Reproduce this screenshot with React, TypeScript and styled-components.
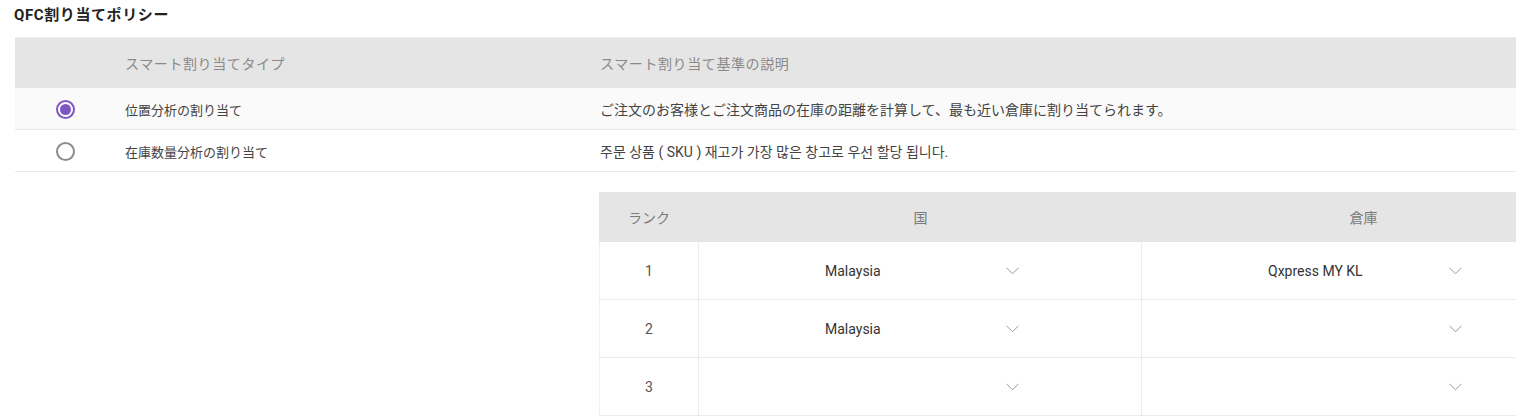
import styled, { createGlobalStyle } from 'styled-components'

const GlobalStyle = createGlobalStyle`
  html, body {
    margin: 0;
    padding: 0;
    background: #fff;
    overflow: hidden;
  }
  body {
    font-family: Roboto, "Noto Sans CJK JP", "Noto Sans CJK KR", sans-serif;
    color: #333;
  }
`

const policies = [
  {
    name: '位置分析の割り当て',
    desc: 'ご注文のお客様とご注文商品の在庫の距離を計算して、最も近い倉庫に割り当てられます。',
    checked: true
  },
  {
    name: '在庫数量分析の割り当て',
    desc: '주문 상품 ( SKU ) 재고가 가장 많은 창고로 우선 할당 됩니다.',
    checked: false
  }
]

const ranks = [
  { rank: 1, country: 'Malaysia', warehouse: 'Qxpress MY KL' },
  { rank: 2, country: 'Malaysia', warehouse: '' },
  { rank: 3, country: '', warehouse: '' }
]

const Chevron = () => (
  <svg width="13" height="8" viewBox="0 0 13 8" fill="none">
    <polyline points="0.5,0.8 6.5,6.8 12.5,0.8" stroke="#9a9a9a" strokeWidth="1" />
  </svg>
)

const Radio = (props: { checked: boolean }) => (
  <RadioRing checked={props.checked}>{props.checked && <RadioDot />}</RadioRing>
)

export default function App() {
  return (
    <Page>
      <GlobalStyle />
      <Title>QFC割り当てポリシー</Title>
      <PolicyTable>
        <HeadRow>
          <HeadCell />
          <HeadCell>スマート割り当てタイプ</HeadCell>
          <HeadCell>スマート割り当て基準の説明</HeadCell>
        </HeadRow>
        {policies.map((p, i) => (
          <PolicyRow key={p.name} shaded={i === 0}>
            <RadioCell>
              <Radio checked={p.checked} />
            </RadioCell>
            <NameCell>{p.name}</NameCell>
            <DescCell>{p.desc}</DescCell>
          </PolicyRow>
        ))}
        <DetailRow>
          <div />
          <div />
          <RankTable>
            <RankHead>
              <RankHeadCell>ランク</RankHeadCell>
              <RankHeadCell>国</RankHeadCell>
              <RankHeadCell>倉庫</RankHeadCell>
            </RankHead>
            {ranks.map((r) => (
              <RankRow key={r.rank}>
                <RankNo>{r.rank}</RankNo>
                <SelectCell>
                  <Select>
                    <SelectValue>{r.country}</SelectValue>
                    <Chevron />
                  </Select>
                </SelectCell>
                <SelectCell>
                  <Select>
                    <SelectValue>{r.warehouse}</SelectValue>
                    <Chevron />
                  </Select>
                </SelectCell>
              </RankRow>
            ))}
          </RankTable>
        </DetailRow>
      </PolicyTable>
    </Page>
  )
}

const Page = styled.div`
  width: 1700px;
  height: 417px;
  overflow: hidden;
`
const Title = styled.div`
  height: 37px;
  padding: 5px 0 0 14px;
  box-sizing: border-box;
  font-size: 15px;
  font-weight: 700;
  line-height: 20px;
  letter-spacing: 0.6px;
  color: #222;
`
const PolicyTable = styled.div`
  margin-left: 15px;
  width: 1620px;
  border-top: 1px solid #ececec;
`
const Columns = styled.div`
  display: grid;
  grid-template-columns: 100px 475px 1fr;
`
const HeadRow = styled(Columns)`
  height: 50px;
  background: #e5e5e5;
  align-items: center;
`
const HeadCell = styled.div`
  padding-left: 10px;
  font-size: 14px;
  letter-spacing: 0.6px;
  color: #8a8a8a;
`
const PolicyRow = styled(Columns)<{ shaded: boolean }>`
  height: 42px;
  box-sizing: border-box;
  align-items: center;
  background: ${(p) => (p.shaded ? '#fafafa' : '#fff')};
  border-bottom: 1px solid #e9e9e9;
  font-size: 13px;
  color: #444;
`
const RadioCell = styled.div`
  display: flex;
  justify-content: center;
  padding-top: 1px;
`
const RadioRing = styled.div<{ checked: boolean }>`
  width: 19px;
  height: 19px;
  box-sizing: border-box;
  border-radius: 50%;
  border: 2px solid ${(p) => (p.checked ? '#7e57c2' : '#8c8c8c')};
  display: flex;
  align-items: center;
  justify-content: center;
`
const RadioDot = styled.div`
  width: 11px;
  height: 11px;
  border-radius: 50%;
  background: #7e57c2;
`
const NameCell = styled.div`
  padding: 1px 0 0 10px;
`
const DescCell = styled.div`
  padding: 1px 0 0 10px;
  font-size: 14px;
  color: #444;
`
const DetailRow = styled(Columns)`
  padding-top: 20px;
`
const RankTable = styled.div`
  margin-left: 9px;
  width: 986px;
`
const RankGrid = styled.div`
  display: grid;
  grid-template-columns: 100px 443px 443px;
`
const RankHead = styled(RankGrid)`
  height: 50px;
  background: #e5e5e5;
  align-items: center;
`
const RankHeadCell = styled.div`
  text-align: center;
  font-size: 14px;
  color: #7a7a7a;
`
const RankRow = styled(RankGrid)`
  height: 58px;
  box-sizing: border-box;
  border-bottom: 1px solid #ebebeb;
`
const RankNo = styled.div`
  display: flex;
  align-items: center;
  justify-content: center;
  border-left: 1px solid #f0f0f0;
  border-right: 1px solid #ebebeb;
  font-size: 14px;
  color: #555;
`
const SelectCell = styled.div`
  display: flex;
  align-items: center;
  justify-content: center;
  border-right: 1px solid #ebebeb;
`
const Select = styled.div`
  width: 218px;
  box-sizing: border-box;
  padding: 0 10px 0 14px;
  display: flex;
  align-items: center;
  justify-content: space-between;
  height: 30px;
`
const SelectValue = styled.span`
  font-size: 14px;
  color: #333;
`
